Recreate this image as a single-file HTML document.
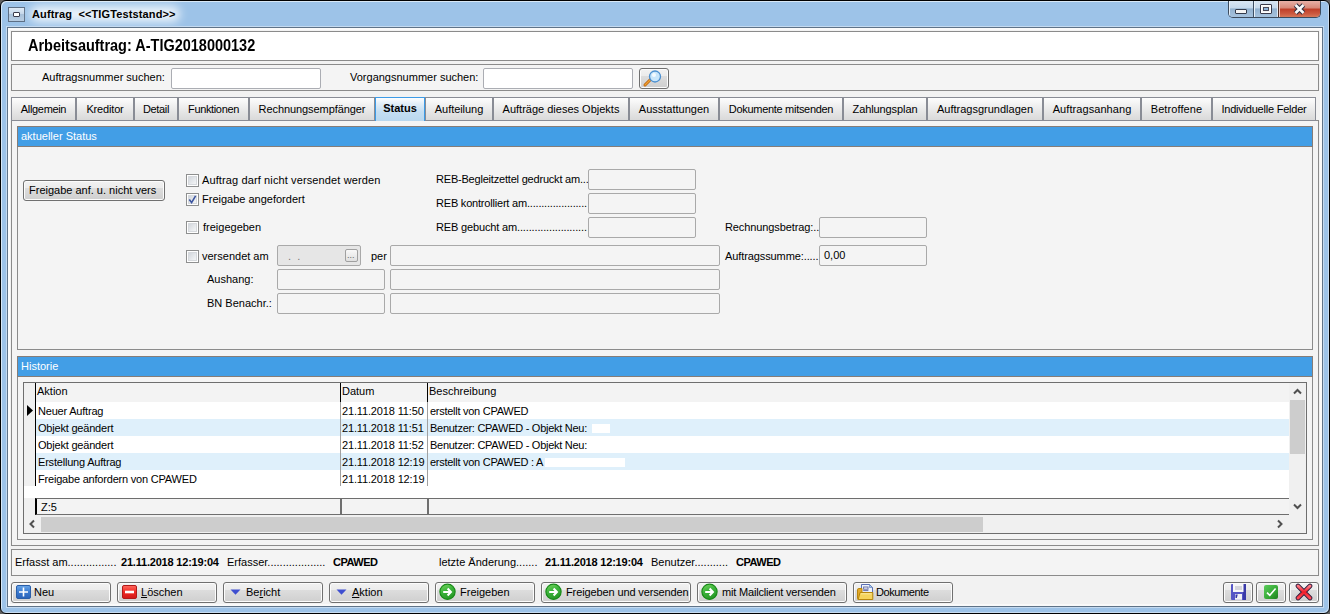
<!DOCTYPE html>
<html><head><meta charset="utf-8">
<style>
*{box-sizing:border-box;margin:0;padding:0}
html,body{width:1330px;height:614px;overflow:hidden;background:#606060}
body{position:relative;font-family:"Liberation Sans",sans-serif;font-size:11px;color:#000}
.a{position:absolute}
.t{position:absolute;white-space:nowrap;line-height:13px}
#win{left:0;top:0;width:1330px;height:614px;border:1px solid #000;border-radius:6px;background:#9dc3e8;box-shadow:inset 1px 1px 0 #d8e8f6,inset -1px -1px 0 #c8dcf0}
#client{left:7px;top:27px;width:1316px;height:580px;border:1px solid #5f7388;background:#f2f2f2;box-shadow:0 0 0 1px #c4daf0,inset 0 0 0 2px #fafafa}
.pnl{position:absolute;border:1px solid #8b8b8b;background:#f4f4f4}
.inp{position:absolute;border:1px solid #abadb3;border-radius:2px;background:#fff}
.fld{position:absolute;border:1px solid #a9a9a9;border-radius:2px;background:#f4f4f4}
.tab{position:absolute;top:97px;height:24px;border:1px solid #898c95;background:linear-gradient(#fdfdfd,#ececec 45%,#d9d9d9);text-align:center;line-height:23px;letter-spacing:-0.3px}
.hdr{position:absolute;background:#429ee6;border:1px solid #857d78;color:#fff;line-height:18px;padding-left:3px}
.btn{position:absolute;border:1px solid #707070;border-radius:3px;background:linear-gradient(#f2f2f2,#ebebeb 38%,#dddddd 38%,#cfcfcf);box-shadow:inset 0 0 0 1px #fcfcfc;line-height:19px}
.cb{position:absolute;width:13px;height:13px;border:1px solid #8e8f8f;background:linear-gradient(135deg,#c9ced5,#eef0f2 70%,#f8f8f8);box-shadow:inset 0 0 0 1px #fff,inset 0 0 0 2px #d6d9dd}
.row{position:absolute;left:24px;width:1265px;height:17px}
</style></head>
<body>
<div id="win" class="a"></div>
<!-- title bar -->
<div class="a" style="left:8px;top:7px;width:17px;height:15px;border:1px solid #5d6f85;background:linear-gradient(#dfeaf5,#c3d5e8 50%,#a9c1da 50%,#b8cde2)"></div>
<div class="a" style="left:13px;top:12px;width:7px;height:5px;border:1px solid #3b3b4b;background:#fff;border-radius:1px"></div>
<div class="a" style="left:30px;top:6px;width:150px;height:16px;background:rgba(255,255,255,.8);border-radius:9px;filter:blur(5px)"></div>
<div class="t" style="left:32px;top:7px;font-size:11px;font-weight:bold;line-height:14px;letter-spacing:0.13px">Auftrag&nbsp; &lt;&lt;TIGTeststand&gt;&gt;</div>
<!-- caption buttons -->
<div class="a" style="left:1228px;top:1px;width:93px;height:17px;border:1px solid #3c4b5d;border-top:none;border-radius:0 0 5px 5px;overflow:hidden">
  <div class="a" style="left:0;top:0;width:24px;height:16px;background:linear-gradient(#d9e6f3,#c6d9ec 42%,#93b2d0 50%,#a6c2dd);box-shadow:inset 1px 0 0 #e8f0f8"></div>
  <div class="a" style="left:24px;top:0;width:1px;height:16px;background:#3e4f63"></div>
  <div class="a" style="left:25px;top:0;width:24px;height:16px;background:linear-gradient(#d9e6f3,#c6d9ec 42%,#93b2d0 50%,#a6c2dd);box-shadow:inset 1px 0 0 #e8f0f8,inset -1px 0 0 #e0ecf6"></div>
  <div class="a" style="left:49px;top:0;width:1px;height:16px;background:#4a2a22"></div>
  <div class="a" style="left:50px;top:0;width:43px;height:16px;background:linear-gradient(#e8b0a6,#d88a7a 42%,#c0402a 52%,#cc5a40 80%,#d87858);box-shadow:inset 1px 0 0 #f0c8c0"></div>
</div>
<div class="a" style="left:1235px;top:9px;width:12px;height:5px;border:1px solid #333a4a;background:#f4f4f4;border-radius:1px"></div>
<div class="a" style="left:1260px;top:4px;width:12px;height:10px;border:1px solid #3a3a4a;background:#f4f4f4;border-radius:1px;box-shadow:inset 0 0 0 1px #fff"></div>
<div class="a" style="left:1263px;top:7px;width:6px;height:4px;border:1px solid #4a4a5a;background:#8fb6dc"></div>
<svg class="a" style="left:1293px;top:3px" width="13" height="12" viewBox="0 0 13 12"><path d="M2.5 2 L10.5 10 M10.5 2 L2.5 10" stroke="#2e2e3e" stroke-width="4.6" stroke-linecap="butt"/><path d="M2.5 2 L10.5 10 M10.5 2 L2.5 10" stroke="#fafafa" stroke-width="2.6"/></svg>

<div id="client" class="a"></div>
<!-- header -->
<div class="a" style="left:11px;top:31px;width:1308px;height:30px;border:1px solid #8b8b8b;background:#fff"></div>
<div class="t" style="left:28px;top:37px;font-size:16px;font-weight:bold;line-height:17px;transform:scaleX(0.905);transform-origin:0 0">Arbeitsauftrag: A-TIG2018000132</div>
<!-- search -->
<div class="pnl" style="left:11px;top:64px;width:1308px;height:27px"></div>
<div class="t" style="left:42px;top:71px">Auftragsnummer suchen:</div>
<div class="inp" style="left:171px;top:68px;width:150px;height:21px"></div>
<div class="t" style="left:350px;top:71px">Vorgangsnummer suchen:</div>
<div class="inp" style="left:483px;top:68px;width:150px;height:21px"></div>
<div class="btn" style="left:639px;top:68px;width:30px;height:21px"></div>
<svg class="a" style="left:642px;top:69px" width="24" height="19" viewBox="0 0 24 19"><line x1="3" y1="16" x2="9" y2="10" stroke="#b8600c" stroke-width="3" stroke-linecap="round"/><line x1="3" y1="16" x2="9" y2="10" stroke="#f0a030" stroke-width="1.5" stroke-linecap="round"/><circle cx="13" cy="7.5" r="5.5" fill="#c9e6fb" stroke="#4b8fd0" stroke-width="1.3"/><circle cx="12" cy="6" r="2" fill="#fff" opacity=".8"/></svg>
<!-- tab content panel -->
<div class="pnl" style="left:11px;top:120px;width:1308px;height:426px"></div>
<!-- tabs -->
<div class="tab" style="left:11px;width:65px;letter-spacing:-0.33px">Allgemein</div>
<div class="tab" style="left:76px;width:58px;letter-spacing:-0.16px">Kreditor</div>
<div class="tab" style="left:134px;width:44px;letter-spacing:-0.35px">Detail</div>
<div class="tab" style="left:178px;width:71px;letter-spacing:-0.36px">Funktionen</div>
<div class="tab" style="left:249px;width:126px;letter-spacing:-0.08px">Rechnungsempfänger</div>
<div class="tab" style="left:375px;width:50px;height:24px;border-color:#3c9be6;border-bottom:none;background:linear-gradient(#fdfeff,#e2eef8 25%,#c4def2 60%,#b9d8ef);font-weight:bold;line-height:21px;letter-spacing:0">Status</div>
<div class="tab" style="left:425px;width:68px;letter-spacing:-0.05px">Aufteilung</div>
<div class="tab" style="left:493px;width:136px;letter-spacing:0px">Aufträge dieses Objekts</div>
<div class="tab" style="left:629px;width:90px;letter-spacing:0px">Ausstattungen</div>
<div class="tab" style="left:719px;width:124px;letter-spacing:-0.3px">Dokumente mitsenden</div>
<div class="tab" style="left:843px;width:84px;letter-spacing:-0.1px">Zahlungsplan</div>
<div class="tab" style="left:927px;width:116px;letter-spacing:0px">Auftragsgrundlagen</div>
<div class="tab" style="left:1043px;width:98px;letter-spacing:0.07px">Auftragsanhang</div>
<div class="tab" style="left:1141px;width:71px;letter-spacing:0.1px">Betroffene</div>
<div class="tab" style="left:1212px;width:104px;letter-spacing:-0.22px">Individuelle Felder</div>

<!-- aktueller Status section -->
<div class="pnl" style="left:17px;top:126px;width:1296px;height:224px"></div>
<div class="hdr" style="left:17px;top:126px;width:1296px;height:21px">aktueller Status</div>

<div class="btn" style="left:23px;top:180px;width:142px;height:21px;padding-left:5px">Freigabe anf. u. nicht vers</div>
<div class="cb" style="left:186px;top:174px"></div>
<div class="t" style="left:202px;top:174px;letter-spacing:0.12px">Auftrag darf nicht versendet werden</div>
<div class="cb" style="left:186px;top:193px"></div>
<svg class="a" style="left:187px;top:194px" width="11" height="11" viewBox="0 0 11 11"><path d="M2.3 5.6 L4.6 8.6 L8.6 1.8" fill="none" stroke="#3c55a0" stroke-width="1.6"/></svg>
<div class="t" style="left:202px;top:193px">Freigabe angefordert</div>
<div class="cb" style="left:186px;top:221px"></div>
<div class="t" style="left:203px;top:221px">freigegeben</div>
<div class="cb" style="left:186px;top:250px"></div>
<div class="t" style="left:202px;top:250px">versendet am</div>
<div class="fld" style="left:277px;top:245px;width:84px;height:21px;background:#e6e6e6"></div>
<div class="t" style="left:288px;top:250px;color:#777">.&nbsp; .</div>
<div class="a" style="left:345px;top:249px;width:13px;height:13px;border:1px solid #a0a0a0;border-radius:2px;background:linear-gradient(#f8f8f8,#e0e0e0)"></div>
<div class="t" style="left:347px;top:250px;font-size:9px;color:#666;line-height:10px">...</div>
<div class="t" style="left:371px;top:250px">per</div>
<div class="fld" style="left:390px;top:245px;width:330px;height:21px"></div>
<div class="t" style="left:207px;top:273px">Aushang:</div>
<div class="fld" style="left:277px;top:269px;width:108px;height:21px"></div>
<div class="fld" style="left:390px;top:269px;width:330px;height:21px"></div>
<div class="t" style="left:207px;top:297px">BN Benachr.:</div>
<div class="fld" style="left:277px;top:293px;width:108px;height:21px"></div>
<div class="fld" style="left:390px;top:293px;width:330px;height:21px"></div>
<div class="t" style="left:436px;top:173px;letter-spacing:-0.2px">REB-Begleitzettel gedruckt am...</div>
<div class="fld" style="left:588px;top:169px;width:108px;height:21px"></div>
<div class="t" style="left:436px;top:197px;letter-spacing:-0.2px">REB kontrolliert am.....................</div>
<div class="fld" style="left:588px;top:193px;width:108px;height:21px"></div>
<div class="t" style="left:436px;top:221px;letter-spacing:-0.15px">REB gebucht am........................</div>
<div class="fld" style="left:588px;top:217px;width:108px;height:21px"></div>
<div class="t" style="left:725px;top:221px;letter-spacing:-0.1px">Rechnungsbetrag:..</div>
<div class="fld" style="left:819px;top:217px;width:108px;height:21px"></div>
<div class="t" style="left:725px;top:250px;letter-spacing:-0.1px">Auftragssumme:.....</div>
<div class="fld" style="left:819px;top:245px;width:108px;height:21px"></div>
<div class="t" style="left:824px;top:249px">0,00</div>

<!-- Historie -->
<div class="pnl" style="left:17px;top:356px;width:1296px;height:184px"></div>
<div class="hdr" style="left:17px;top:356px;width:1296px;height:21px">Historie</div>
<div class="a" style="left:23px;top:382px;width:1284px;height:152px;border:1px solid #6e6e6e;background:#fff"></div>
<div class="a" style="left:24px;top:383px;width:1265px;height:19px;background:#f3f3f3"></div>
<div class="a" style="left:24px;top:383px;width:11px;height:103px;background:#f0f0f0"></div>
<div class="a" style="left:35px;top:383px;width:1px;height:103px;background:#000"></div>
<div class="a" style="left:340px;top:383px;width:1px;height:19px;background:#000"></div>
<div class="a" style="left:427px;top:383px;width:1px;height:19px;background:#000"></div>
<div class="t" style="left:37px;top:385px">Aktion</div>
<div class="t" style="left:342px;top:385px">Datum</div>
<div class="t" style="left:429px;top:385px">Beschreibung</div>
<div class="row" style="left:36px;top:419px;width:1253px;background:#dff0fb"></div>
<div class="row" style="left:36px;top:453px;width:1253px;background:#dff0fb"></div>
<div class="a" style="left:340px;top:402px;width:1px;height:85px;background:#a0a0a0"></div>
<div class="a" style="left:427px;top:402px;width:1px;height:85px;background:#a0a0a0"></div>
<svg class="a" style="left:27px;top:405px" width="7" height="12" viewBox="0 0 7 12"><path d="M0 0 L6 5.5 L0 11 Z" fill="#000"/></svg>
<div class="t" style="left:38px;top:405px;letter-spacing:-0.2px">Neuer Auftrag</div>
<div class="t" style="left:342px;top:405px;letter-spacing:-0.15px">21.11.2018 11:50</div>
<div class="t" style="left:430px;top:405px;letter-spacing:-0.27px">erstellt von CPAWED</div>
<div class="t" style="left:38px;top:422px;letter-spacing:-0.2px">Objekt geändert</div>
<div class="t" style="left:342px;top:422px;letter-spacing:-0.15px">21.11.2018 11:51</div>
<div class="t" style="left:430px;top:422px;letter-spacing:-0.27px">Benutzer: CPAWED - Objekt Neu:</div>
<div class="a" style="left:592px;top:424px;width:18px;height:9px;background:#fff"></div>
<div class="t" style="left:38px;top:439px;letter-spacing:-0.2px">Objekt geändert</div>
<div class="t" style="left:342px;top:439px;letter-spacing:-0.15px">21.11.2018 11:52</div>
<div class="t" style="left:430px;top:439px;letter-spacing:-0.27px">Benutzer: CPAWED - Objekt Neu:</div>
<div class="t" style="left:38px;top:456px;letter-spacing:-0.2px">Erstellung Auftrag</div>
<div class="t" style="left:342px;top:456px;letter-spacing:-0.15px">21.11.2018 12:19</div>
<div class="t" style="left:430px;top:456px;letter-spacing:-0.27px">erstellt von CPAWED : A</div>
<div class="a" style="left:545px;top:458px;width:80px;height:9px;background:#fff"></div>
<div class="t" style="left:38px;top:473px;letter-spacing:-0.2px">Freigabe anfordern von CPAWED</div>
<div class="t" style="left:342px;top:473px;letter-spacing:-0.15px">21.11.2018 12:19</div>
<!-- footer row -->
<div class="a" style="left:24px;top:486px;width:1265px;height:12px;background:#fff"></div>
<div class="a" style="left:24px;top:498px;width:1265px;height:17px;background:#f0f0f0"></div>
<div class="a" style="left:35px;top:498px;width:306px;height:17px;border:1px solid #6e6e6e;border-left:2px solid #000;background:#f3f3f3"></div>
<div class="a" style="left:341px;top:498px;width:87px;height:17px;border:1px solid #6e6e6e;background:#f3f3f3"></div>
<div class="a" style="left:428px;top:498px;width:861px;height:17px;border:1px solid #6e6e6e;border-right:none;background:#f3f3f3"></div>
<div class="t" style="left:41px;top:501px">Z:5</div>
<!-- scrollbars -->
<div class="a" style="left:1289px;top:383px;width:17px;height:132px;background:#f0f0f0"></div>
<div class="a" style="left:1290px;top:400px;width:15px;height:54px;background:#cdcdcd"></div>
<svg class="a" style="left:1292px;top:387px" width="11" height="9" viewBox="0 0 11 9"><path d="M2 6.5 L5.5 3 L9 6.5" fill="none" stroke="#505050" stroke-width="2"/></svg>
<svg class="a" style="left:1292px;top:502px" width="11" height="9" viewBox="0 0 11 9"><path d="M2 2.5 L5.5 6 L9 2.5" fill="none" stroke="#505050" stroke-width="2"/></svg>
<div class="a" style="left:24px;top:515px;width:1282px;height:18px;background:#f0f0f0"></div>
<div class="a" style="left:41px;top:517px;width:942px;height:15px;background:#cdcdcd"></div>
<svg class="a" style="left:28px;top:519px" width="8" height="10" viewBox="0 0 8 10"><path d="M6 1.5 L2.5 5 L6 8.5" fill="none" stroke="#505050" stroke-width="2"/></svg>
<svg class="a" style="left:1276px;top:519px" width="8" height="10" viewBox="0 0 8 10"><path d="M2 1.5 L5.5 5 L2 8.5" fill="none" stroke="#505050" stroke-width="2"/></svg>

<!-- info panel -->
<div class="pnl" style="left:11px;top:549px;width:1308px;height:27px"></div>
<div class="t" style="left:15px;top:556px">Erfasst am................</div>
<div class="t" style="left:121px;top:556px;font-weight:bold;letter-spacing:-0.2px">21.11.2018 12:19:04</div>
<div class="t" style="left:227px;top:556px">Erfasser...................</div>
<div class="t" style="left:333px;top:556px;font-weight:bold;letter-spacing:-0.5px">CPAWED</div>
<div class="t" style="left:439px;top:556px">letzte Änderung.......</div>
<div class="t" style="left:545px;top:556px;font-weight:bold;letter-spacing:-0.2px">21.11.2018 12:19:04</div>
<div class="t" style="left:651px;top:556px">Benutzer...........</div>
<div class="t" style="left:736px;top:556px;font-weight:bold;letter-spacing:-0.5px">CPAWED</div>

<!-- buttons -->
<div class="btn" style="left:11px;top:582px;width:100px;height:21px"></div>
<div class="btn" style="left:117px;top:582px;width:100px;height:21px"></div>
<div class="btn" style="left:223px;top:582px;width:100px;height:21px"></div>
<div class="btn" style="left:329px;top:582px;width:100px;height:21px"></div>
<div class="btn" style="left:435px;top:582px;width:100px;height:21px"></div>
<div class="btn" style="left:541px;top:582px;width:150px;height:21px"></div>
<div class="btn" style="left:697px;top:582px;width:150px;height:21px"></div>
<div class="btn" style="left:853px;top:582px;width:100px;height:21px"></div>
<div class="btn" style="left:1223px;top:582px;width:30px;height:21px"></div>
<div class="btn" style="left:1256px;top:582px;width:30px;height:21px"></div>
<div class="btn" style="left:1289px;top:582px;width:30px;height:21px"></div>
<div class="t" style="left:34px;top:586px">Neu</div>
<div class="t" style="left:141px;top:586px"><u>L</u>öschen</div>
<div class="t" style="left:246px;top:586px">Be<u>r</u>icht</div>
<div class="t" style="left:352px;top:586px"><u>A</u>ktion</div>
<div class="t" style="left:460px;top:586px">Freigeben</div>
<div class="t" style="left:566px;top:586px;letter-spacing:-0.12px">Freigeben und versenden</div>
<div class="t" style="left:722px;top:586px;letter-spacing:-0.18px">mit Mailclient versenden</div>
<div class="t" style="left:876px;top:586px;letter-spacing:-0.4px">Dokumente</div>
<!-- icons -->
<svg class="a" style="left:16px;top:585px" width="15" height="14" viewBox="0 0 15 14"><defs><linearGradient id="gb" x1="0" y1="0" x2="0" y2="1"><stop offset="0" stop-color="#6aa6e8"/><stop offset="0.5" stop-color="#3a7ad0"/><stop offset="1" stop-color="#2a62b8"/></linearGradient></defs><rect x="0.5" y="0.5" width="14" height="13" rx="1.5" fill="url(#gb)" stroke="#2a5ea8"/><path d="M7.5 2.5 V11.5 M3 7 H12" stroke="#fff" stroke-width="1.6"/></svg>
<svg class="a" style="left:122px;top:585px" width="15" height="14" viewBox="0 0 15 14"><defs><linearGradient id="gr" x1="0" y1="0" x2="0" y2="1"><stop offset="0" stop-color="#ff6a60"/><stop offset="0.5" stop-color="#f02a24"/><stop offset="1" stop-color="#d01818"/></linearGradient></defs><rect x="0.5" y="0.5" width="14" height="13" rx="1.5" fill="url(#gr)" stroke="#b01a1a"/><rect x="3" y="5.7" width="9" height="2.6" fill="#fff"/></svg>
<svg class="a" style="left:230px;top:589px" width="11" height="6" viewBox="0 0 11 6"><path d="M0.5 0.5 H10.5 L5.5 5.8 Z" fill="#3f4fd0"/></svg>
<svg class="a" style="left:336px;top:589px" width="11" height="6" viewBox="0 0 11 6"><path d="M0.5 0.5 H10.5 L5.5 5.8 Z" fill="#3f4fd0"/></svg>
<svg class="a" style="left:439px;top:583px" width="18" height="18" viewBox="0 0 18 18"><defs><linearGradient id="gg439" x1="0" y1="0" x2="0.4" y2="1"><stop offset="0" stop-color="#7ad860"/><stop offset="0.5" stop-color="#3cb43c"/><stop offset="1" stop-color="#2a9a2a"/></linearGradient></defs><circle cx="8.5" cy="8.8" r="7.6" fill="url(#gg439)" stroke="#188a18" stroke-width="1.2"/><path d="M4.2 9 H11.5 M8.6 5.6 L11.9 9 L8.6 12.4" fill="none" stroke="#fff" stroke-width="2.1"/></svg>
<svg class="a" style="left:545px;top:583px" width="18" height="18" viewBox="0 0 18 18"><defs><linearGradient id="gg545" x1="0" y1="0" x2="0.4" y2="1"><stop offset="0" stop-color="#7ad860"/><stop offset="0.5" stop-color="#3cb43c"/><stop offset="1" stop-color="#2a9a2a"/></linearGradient></defs><circle cx="8.5" cy="8.8" r="7.6" fill="url(#gg545)" stroke="#188a18" stroke-width="1.2"/><path d="M4.2 9 H11.5 M8.6 5.6 L11.9 9 L8.6 12.4" fill="none" stroke="#fff" stroke-width="2.1"/></svg>
<svg class="a" style="left:701px;top:583px" width="18" height="18" viewBox="0 0 18 18"><defs><linearGradient id="gg701" x1="0" y1="0" x2="0.4" y2="1"><stop offset="0" stop-color="#7ad860"/><stop offset="0.5" stop-color="#3cb43c"/><stop offset="1" stop-color="#2a9a2a"/></linearGradient></defs><circle cx="8.5" cy="8.8" r="7.6" fill="url(#gg701)" stroke="#188a18" stroke-width="1.2"/><path d="M4.2 9 H11.5 M8.6 5.6 L11.9 9 L8.6 12.4" fill="none" stroke="#fff" stroke-width="2.1"/></svg>
<svg class="a" style="left:856px;top:583px" width="18" height="18" viewBox="0 0 18 18"><path d="M5.5 1.5 H13.5 L16.5 4.5 V15.5 H5.5 Z" fill="#eef4fb" stroke="#5a6eb4"/><path d="M13.5 1.5 V4.5 H16.5 Z" fill="#9ccff2" stroke="#5a6eb4" stroke-width="0.6"/><rect x="7.6" y="4" width="4.4" height="2.2" fill="none" stroke="#6a70a8"/><path d="M7.2 7.6 H12.4" stroke="#6a70a8"/><path d="M1.5 6.8 Q1.5 5.5 2.8 5.5 H6 V16.5 H2.5 Q1.5 16.5 1.5 15.5 Z" fill="#e3a82a" stroke="#b8860c"/><path d="M4 9.5 H16.8 V16.5 H2.2 Z" fill="#f6d45c" stroke="#b8860c"/><path d="M5 10.8 H15.5" stroke="#fbe9a0" stroke-width="1"/></svg>
<svg class="a" style="left:1230px;top:583px" width="17" height="18" viewBox="0 0 17 18"><path d="M1 2 Q1 1 2 1 H15 Q16 1 16 2 V16 Q16 17 15 17 H2 Q1 17 1 16 Z" fill="#5656c6"/><path d="M13 1 H16 V17 H13 Z" fill="#3a3aa8"/><rect x="3" y="1" width="10.5" height="8" fill="#f6f6f8"/><rect x="5" y="3" width="7" height="4" fill="#d4d4dc"/><rect x="5" y="11" width="7" height="5.8" fill="#f2f2f4"/><path d="M5.5 11.5 H7.8 L6.8 15 H5.5 Z" fill="#3636a8"/></svg>
<svg class="a" style="left:1264px;top:585px" width="14" height="14" viewBox="0 0 14 14"><defs><linearGradient id="gc" x1="0" y1="0" x2="1" y2="1"><stop offset="0" stop-color="#5ccc5c"/><stop offset="0.6" stop-color="#34a834"/><stop offset="1" stop-color="#1e7e1e"/></linearGradient></defs><rect x="0" y="0" width="14" height="14" rx="2" fill="url(#gc)"/><path d="M3 7.6 L5.8 10.3 L11.6 3.6" fill="none" stroke="#fff" stroke-width="1.6"/></svg>
<svg class="a" style="left:1295px;top:583px" width="18" height="18" viewBox="0 0 18 18"><defs><linearGradient id="gx" x1="0" y1="0" x2="0" y2="1"><stop offset="0" stop-color="#ff7c86"/><stop offset="0.5" stop-color="#f01c28"/><stop offset="1" stop-color="#ff4a56"/></linearGradient></defs><path d="M3 3 L15 15 M15 3 L3 15" stroke="#2a1a3a" stroke-width="4.6" stroke-linecap="round"/><path d="M3 3 L15 15 M15 3 L3 15" stroke="url(#gx)" stroke-width="3" stroke-linecap="round"/></svg>
</body></html>
